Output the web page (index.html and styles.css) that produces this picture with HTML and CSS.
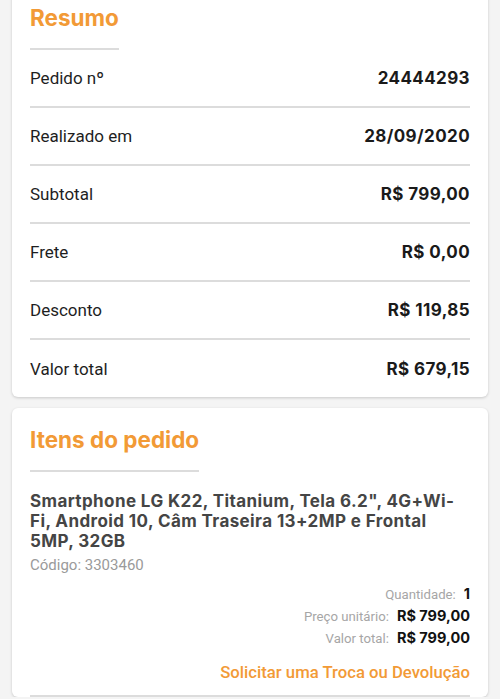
FILE: index.html
```html
<!DOCTYPE html>
<html lang="pt-BR">
<head>
  <meta charset="UTF-8" />
  <meta name="viewport" content="width=device-width, initial-scale=1.0"/>
  <title>Detalhes do pedido</title>
  <link rel="stylesheet" href="styles.css">
</head>
<body>
  <main class="page">
    <section class="card">
      <h2 class="card-title">Resumo</h2>
      <div class="row"><span class="label">Pedido nº</span><strong class="value">24444293</strong></div>
      <div class="row"><span class="label">Realizado em</span><strong class="value">28/09/2020</strong></div>
      <div class="row"><span class="label">Subtotal</span><strong class="value">R$ 799,00</strong></div>
      <div class="row"><span class="label">Frete</span><strong class="value">R$ 0,00</strong></div>
      <div class="row"><span class="label">Desconto</span><strong class="value">R$ 119,85</strong></div>
      <div class="row"><span class="label">Valor total</span><strong class="value">R$ 679,15</strong></div>
    </section>

    <section class="card">
      <h2 class="card-title">Itens do pedido</h2>
      <div class="item">
        <p class="item-name">Smartphone LG K22, Titanium, Tela 6.2", 4G+Wi-Fi, Android 10, Câm Traseira 13+2MP e Frontal 5MP, 32GB</p>
        <p class="item-code">Código: 3303460</p>
        <div class="item-prices">
          <p><span>Quantidade:</span> <strong>1</strong></p>
          <p><span>Preço unitário:</span> <strong>R$ 799,00</strong></p>
          <p><span>Valor total:</span> <strong>R$ 799,00</strong></p>
        </div>
        <a class="item-action" href="#">Solicitar uma Troca ou Devolução</a>
      </div>
    </section>
  </main>
</body>
</html>
```

FILE: styles.css
```css
body {
  margin: 0;
  background: #f4f4f4;
  font-family: Roboto, "Liberation Sans", sans-serif;
  color: #222;
}

.page {
  margin-top: -14px;
  padding: 0 12px;
  display: flex;
  flex-direction: column;
  gap: 11px;
}

.card {
  background: #fff;
  border-radius: 6px;
  box-shadow: 0 1px 3px rgba(0, 0, 0, 0.18);
  padding: 18px 18px 0;
  display: flex;
  flex-direction: column;
}

.card-title {
  align-self: flex-start;
  margin: 0;
  padding-bottom: 16px;
  border-bottom: 2px solid #dcdcdc;
  font-family: Inter, sans-serif;
  font-size: 22.5px;
  line-height: 28px;
  font-weight: 700;
  color: #f29a36;
}

.row {
  height: 56px;
  display: flex;
  align-items: center;
  justify-content: space-between;
  border-bottom: 2px solid #dcdcdc;
}

.row:last-child {
  height: 57px;
  border-bottom: none;
}

.label {
  font-size: 17px;
  color: #1e1e1e;
}

.value {
  font-family: Inter, sans-serif;
  font-size: 17px;
  font-weight: 700;
  color: #1a1a1a;
  letter-spacing: 0.4px;
}

.item {
  padding-top: 19px;
  display: flex;
  flex-direction: column;
  border-bottom: 2px solid #dcdcdc;
}

.item p {
  margin: 0;
}

.item-name {
  font-family: Inter, sans-serif;
  font-size: 17px;
  line-height: 20px;
  font-weight: 700;
  letter-spacing: 0.4px;
  color: #454545;
}

.item-code {
  margin-top: 4px !important;
  font-size: 15px;
  line-height: 20px;
  color: #9a9a9a;
}

.item-prices {
  margin-top: 8px;
  text-align: right;
  line-height: 21px;
}

.item-prices span {
  font-size: 13.2px;
  color: #a6a6a6;
  margin-right: 4px;
}

.item-prices strong {
  font-family: Inter, sans-serif;
  font-size: 14.5px;
  font-weight: 700;
  color: #111;
}

.item-action {
  align-self: flex-end;
  margin: 14px 0 13px;
  font-size: 16.7px;
  font-weight: 500;
  color: #f29a36;
  text-decoration: none;
}
```
